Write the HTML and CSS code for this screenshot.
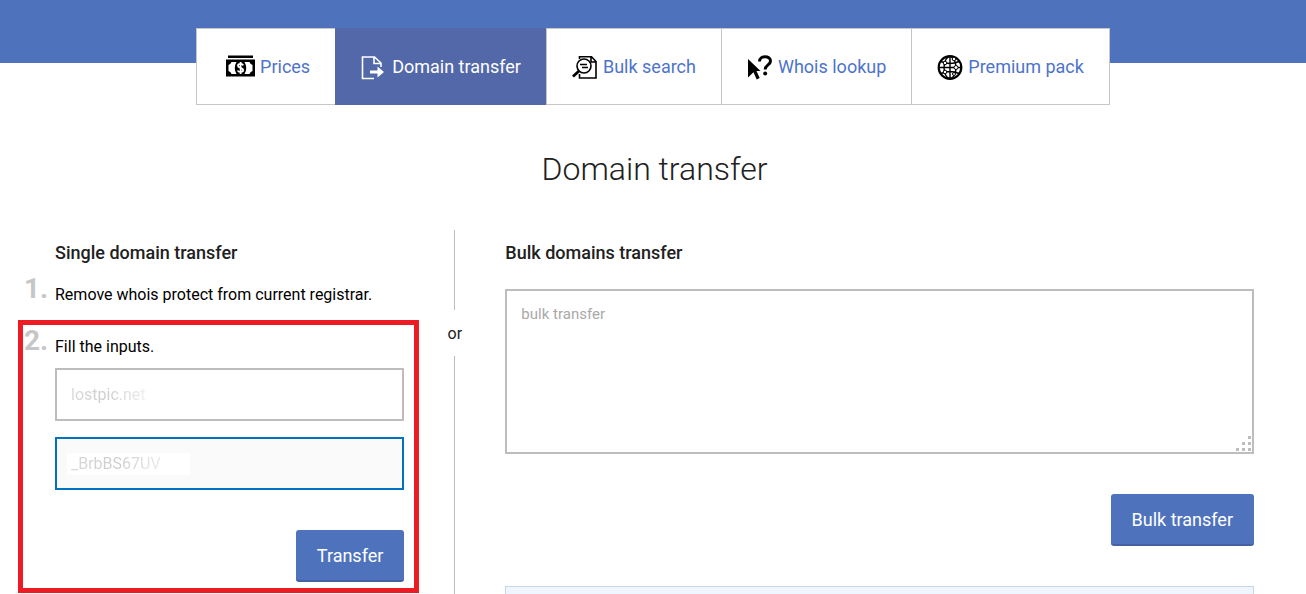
FILE: index.html
```html
<!DOCTYPE html>
<html lang="en">
<head>
    <meta charset="UTF-8">
    <meta name="viewport" content="width=device-width, initial-scale=1.0">
    <title>Domain transfer</title>
    <link rel="stylesheet" href="styles.css">
</head>
<body>
    <header class="top">
        <nav class="tabs">
            <a href="#prices" class="tab">
                <svg class="icon icon-wide" viewBox="0 0 29 26">
                    <path d="M2 1.500h25v2.500H2zM0 5.500h29v17H0z"/>
                    <path fill="#fff" d="M5.500 8h5Q7 14 10.500 20H5.500Q5 18 2.500 17V11Q5 10 5.500 8zM23.500 8h-5Q22 14 18.500 20h5Q24 18 26.500 17V11Q24 10 23.500 8z"/>
                    <path fill="none" stroke="#fff" stroke-width="1.800" d="M17.200 11.300C16.400 9.400 12 9.500 12 11.800c0 2.400 5.200 1.800 5.200 4.300 0 2.500-4.600 2.600-5.600.4M14.600 8v12"/>
                </svg>
                Prices
            </a>
            <a href="#transfer" class="tab valgt">
                <svg class="icon" viewBox="0 0 26 26">
                    <path fill="none" stroke="#fff" stroke-width="1.600" d="M20 13V9L13.500 3H1.500v21.500H13M13 3v6.500h6.500"/>
                    <path fill="#fff" d="M9 16.500h7.500v-4l6.500 5.500-6.500 5.500v-4H9z"/>
                </svg>
                Domain transfer
            </a>
            <a href="#search" class="tab">
                <svg class="icon" viewBox="0 0 26 26">
                    <path fill="none" stroke="#000" stroke-width="1.600" d="M7.500 5V2.800h12L24 7.500V24H7.500v-4M19 3v5h5"/>
                    <circle cx="12" cy="12" r="7" fill="#fff" stroke="#000" stroke-width="1.600"/>
                    <path fill="none" stroke="#000" stroke-width="1.500" d="M8 10.500h7M10 13.500h6"/>
                    <path fill="none" stroke="#000" stroke-width="2.800" d="M7.500 16.500L1 22.500"/>
                </svg>
                Bulk search
            </a>
            <a href="#whois" class="tab">
                <svg class="icon" viewBox="0 0 26 26">
                    <path d="M1 5l12.500 12H9.500l3.200 7-3 1.500-3.200-7.200L1 23.500z"/>
                    <path fill="none" stroke="#000" stroke-width="3" d="M12.500 7.500C12.500 1 23.500 1.500 23.500 7c0 4-5.300 3.800-5.300 8.500"/>
                    <circle cx="18.200" cy="19.500" r="2"/>
                </svg>
                Whois lookup
            </a>
            <a href="#premium" class="tab">
                <svg class="icon" viewBox="0 0 26 26">
                    <g fill="none" stroke="#000" stroke-width="1.400">
                        <circle cx="13" cy="13.500" r="11.300" stroke-width="2.200"/>
                        <path d="M13 2v23M2 13.500h22M4 7.500Q13 11.500 22 7.500M4 19.500Q13 15.500 22 19.500"/>
                        <ellipse cx="13" cy="13.500" rx="6" ry="11"/>
                    </g>
                    <g fill="#fff" stroke="#000">
                        <circle cx="8" cy="9" r="1.800"/>
                        <circle cx="17" cy="5" r="1.800"/>
                        <circle cx="19" cy="13.500" r="2"/>
                        <circle cx="8" cy="18" r="1.800"/>
                        <circle cx="17" cy="20" r="1.500"/>
                    </g>
                </svg>
                Premium pack
            </a>
        </nav>
    </header>

    <main>
        <h1>Domain transfer</h1>

        <div class="columns">
            <section class="single">
                <h2>Single domain transfer</h2>
                <div class="steps">
                    <div class="step">
                        <span class="number">1.</span>
                        <p>Remove whois protect from current registrar.</p>
                    </div>
                    <form class="step marked">
                        <span class="number">2.</span>
                        <p>Fill the inputs.</p>
                        <input type="text" class="field domain" value="lostpic.net" aria-label="Domain">
                        <input type="text" class="field code" value="_BrbBS67UV" aria-label="Auth code">
                        <button type="button" class="knap">Transfer</button>
                    </form>
                </div>
            </section>

            <div class="divider"><span>or</span></div>

            <form class="bulk">
                <h2>Bulk domains transfer</h2>
                <div class="area">
                    <textarea placeholder="bulk transfer" aria-label="Bulk domains"></textarea>
                    <svg class="grip" viewBox="0 0 15 15">
                        <path d="M12 0h3v3h-3zM6 6h3v3H6zM12 6h3v3h-3zM0 12h3v3H0zM6 12h3v3H6zM12 12h3v3h-3z"/>
                    </svg>
                </div>
                <button type="button" class="knap">Bulk transfer</button>
                <div class="info"></div>
            </form>
        </div>
    </main>
</body>
</html>
```
FILE: styles.css
```css
* {
    box-sizing: border-box;
}

body {
    margin: 0;
    height: 100vh;
    overflow: hidden;
    display: flex;
    flex-direction: column;
    font-family: Roboto, sans-serif;
    font-size: 16px;
    line-height: 24px;
    color: #000;
    background-color: #fff;
}

h1, h2, p {
    margin: 0;
}

/*top*/

.top {
    display: flex;
    justify-content: center;
    align-items: flex-start;
    flex: none;
    height: 63px;
    padding-top: 28px;
    background-color: #4e73bc;
}

.tabs {
    display: flex;
    border: 1px solid #c6c6c6;
    border-left-width: 0;
    background-color: #fff;
}

.tab {
    display: flex;
    align-items: center;
    gap: 5px;
    height: 75px;
    padding: 0 25px;
    border-left: 1px solid #c6c6c6;
    font-size: 18px;
    color: #4e73cc;
    text-decoration: none;
    white-space: nowrap;
}

.tab:first-child {
    padding-left: 29px;
}

.tab.valgt {
    height: 77px;
    margin: -1px 0;
    border-color: #5368a9;
    background-color: #5368a9;
    color: #fff;
}

.icon {
    width: 26px;
    height: 26px;
}

.icon-wide {
    width: 29px;
}

/*content*/

main {
    display: flex;
    flex-direction: column;
    flex: 1;
    padding: 86px 52px 0 55px;
}

h1 {
    font-size: 32px;
    line-height: 40px;
    font-weight: 300;
    text-align: center;
    color: #212121;
}

h2 {
    font-size: 18px;
    font-weight: 500;
    line-height: 24px;
    color: #212121;
}

.columns {
    flex: 1;
    display: grid;
    grid-template-columns: 7fr 101px 15fr;
    margin-top: 41px;
}

.single, .bulk {
    display: flex;
    flex-direction: column;
    padding-top: 11px;
}

.steps {
    display: flex;
    flex-direction: column;
    gap: 28px;
    margin-top: 18px;
}

.step {
    position: relative;
    display: flex;
    flex-direction: column;
}

.number {
    position: absolute;
    left: -31px;
    top: -6px;
    font-size: 28px;
    font-weight: 700;
    color: #c6c6c6;
}

/*red frame around step 2*/
.marked::after {
    content: "";
    position: absolute;
    top: -15px;
    right: -15px;
    bottom: -11px;
    left: -37px;
    border: 5px solid #ed1c24;
    pointer-events: none;
}

.field {
    width: 100%;
    height: 53px;
    padding: 0 14px;
    border: 2px solid #bdbdbd;
    border-radius: 0;
    outline: none;
    font-family: inherit;
    font-size: 16px;
    -webkit-text-fill-color: transparent;
}

.domain {
    margin-top: 9px;
    background: linear-gradient(90deg, #ddd, #ccc 50px, #f0f0f0 90px);
    background-clip: text;
}

.code {
    margin-top: 16px;
    border-color: #0072c0;
    background:
        linear-gradient(90deg, #ddd, #ccc 60px, #eee 110px) text,
        linear-gradient(#fff, #fff) 10px 14px / 123px 22px no-repeat padding-box,
        #fafafa;
}

.knap {
    align-self: flex-end;
    height: 52px;
    margin-top: 40px;
    padding: 0 21px;
    border: 0;
    border-bottom: 2px solid #45619f;
    border-radius: 3px;
    background-color: #4e73bc;
    color: #fff;
    font-family: inherit;
    font-size: 18px;
}

.divider {
    display: flex;
    flex-direction: column;
    align-items: center;
    color: #212121;
}

.divider span {
    padding: 12px 0 10px;
}

.divider::before, .divider::after {
    content: "";
    width: 1px;
    height: 80px;
    background-color: #bdbdbd;
}

.divider::after {
    flex: 1;
}

.area {
    position: relative;
    display: flex;
    margin-top: 24px;
}

textarea {
    width: 100%;
    height: 165px;
    padding: 11px 14px;
    border: 2px solid #bdbdbd;
    outline: none;
    resize: none;
    font-family: inherit;
    font-size: 15px;
    line-height: 24px;
}

textarea::placeholder {
    color: #a9a9a9;
}

.grip {
    position: absolute;
    right: 3px;
    bottom: 3px;
    width: 15px;
    height: 15px;
    fill: #bdbdbd;
}

.info {
    flex: 1;
    margin-top: 40px;
    border: 1px solid #c5d5ea;
    border-bottom: 0;
    background-color: #f0f6ff;
}
```
